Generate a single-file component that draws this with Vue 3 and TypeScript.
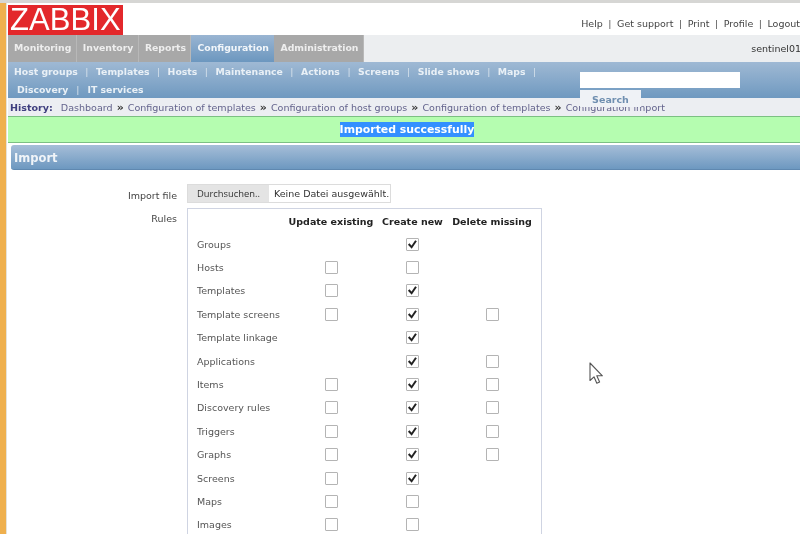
<script setup lang="ts">
interface Rule {
  name: string;
  update: boolean | null;
  create: boolean | null;
  del: boolean | null;
}

const mainMenu: string[] = ['Monitoring', 'Inventory', 'Reports', 'Configuration', 'Administration'];
const subRowOne: string[] = ['Host groups', 'Templates', 'Hosts', 'Maintenance', 'Actions', 'Screens', 'Slide shows', 'Maps'];
const subRowTwo: string[] = ['Discovery', 'IT services'];
const topLinks: string[] = ['Help', 'Get support', 'Print', 'Profile', 'Logout'];
const history: string[] = ['Dashboard', 'Configuration of templates', 'Configuration of host groups', 'Configuration of templates', 'Configuration import'];

const rules: Rule[] = [
  { name: 'Groups', update: null, create: true, del: null },
  { name: 'Hosts', update: false, create: false, del: null },
  { name: 'Templates', update: false, create: true, del: null },
  { name: 'Template screens', update: false, create: true, del: false },
  { name: 'Template linkage', update: null, create: true, del: null },
  { name: 'Applications', update: null, create: true, del: false },
  { name: 'Items', update: false, create: true, del: false },
  { name: 'Discovery rules', update: false, create: true, del: false },
  { name: 'Triggers', update: false, create: true, del: false },
  { name: 'Graphs', update: false, create: true, del: false },
  { name: 'Screens', update: false, create: true, del: null },
  { name: 'Maps', update: false, create: false, del: null },
  { name: 'Images', update: false, create: false, del: null },
];
</script>

<template>
  <div class="page">
    <div class="browser-top"></div>
    <div class="shell">
      <aside class="edge"></aside>
      <main class="content">
        <header class="top">
          <div class="logo">ZABBIX</div>
          <nav class="top-links">
            <template v-for="(link, i) in topLinks" :key="link">
              <span v-if="i" class="top-sep">|</span>
              <a>{{ link }}</a>
            </template>
          </nav>
        </header>

        <div class="main-bar">
          <nav class="main-menu">
            <a v-for="item in mainMenu" :key="item" class="main-item" :class="{ active: item === 'Configuration' }">{{ item }}</a>
          </nav>
          <span class="server">sentinel01</span>
        </div>

        <div class="sub-bar">
          <div class="sub-row first">
            <template v-for="item in subRowOne" :key="item">
              <a>{{ item }}</a><span class="sub-sep">|</span>
            </template>
          </div>
          <div class="sub-row second">
            <template v-for="(item, i) in subRowTwo" :key="item">
              <span v-if="i" class="sub-sep">|</span><a>{{ item }}</a>
            </template>
          </div>
          <div class="search">
            <div class="search-input"></div>
            <div class="search-btn">Search</div>
          </div>
        </div>

        <div class="history">
          <b class="history-label">History:</b>
          <template v-for="(item, i) in history" :key="i">
            <span v-if="i" class="history-sep">»</span>
            <a>{{ item }}</a>
          </template>
        </div>

        <div class="message"><span class="selected">Imported successfully</span></div>

        <section class="panel">
          <h2 class="panel-head">Import</h2>
          <div class="form">
            <div class="form-label file-label">Import file</div>
            <div class="file">
              <span class="file-btn">Durchsuchen..</span>
              <span class="file-name">Keine Datei ausgewählt.</span>
            </div>
            <div class="form-label rules-label">Rules</div>
            <div class="rules">
              <div class="rules-grid head">
                <span></span>
                <b>Update existing</b>
                <b>Create new</b>
                <b>Delete missing</b>
              </div>
              <div v-for="rule in rules" :key="rule.name" class="rules-grid row">
                <span class="rule-name">{{ rule.name }}</span>
                <span class="cell"><i v-if="rule.update !== null" class="box" :class="{ on: rule.update }"></i></span>
                <span class="cell"><i v-if="rule.create !== null" class="box" :class="{ on: rule.create }">
                  <svg v-if="rule.create" viewBox="0 0 13 13" width="13" height="13"><path d="M2.7 6 5.6 9.2 10 2.8" fill="none" stroke="#222" stroke-width="2" /></svg>
                </i></span>
                <span class="cell"><i v-if="rule.del !== null" class="box" :class="{ on: rule.del }"></i></span>
              </div>
            </div>
          </div>
        </section>

        <svg class="cursor" viewBox="0 0 16 24" width="16" height="24">
          <path d="M1 1V18.5L5 14.8 7.8 21.2 10.6 20 7.8 13.8H13.4Z" fill="#fff" stroke="#555" stroke-width="1.1" stroke-linejoin="round" />
        </svg>
      </main>
    </div>
  </div>
</template>

<style>
html, body { margin: 0; background: #fff; overflow: hidden; }
</style>

<style scoped>
.page {
  width: 800px;
  height: 534px;
  overflow: hidden;
  font-family: "DejaVu Sans", sans-serif;
  font-size: 9.5px;
  background: #fff;
  filter: blur(0.45px);
}
.browser-top { height: 3px; background: #d6d6d4; }
.shell { display: flex; height: 531px; }
.edge { width: 6px; flex: none; background: #efb04e; border-right: 1px solid #e6e2d8; }
.content { position: relative; width: 793px; flex: none; padding-left: 1px; box-sizing: border-box; overflow: hidden; }

.top { display: flex; justify-content: space-between; height: 32px; }
.logo {
  width: 115px; height: 30px; margin-top: 2px;
  background: #e3282b; color: #fff;
  font: 31px/30px "Liberation Sans", sans-serif;
  letter-spacing: 0.1px; text-indent: 2px;
}
.top-links { display: flex; gap: 5.5px; padding-top: 14px; color: #444; line-height: 13px; }
.top-sep { color: #555; }

.main-bar { display: flex; justify-content: space-between; height: 27px; background: #eceef0; }
.main-menu { display: flex; }
.main-item {
  padding: 0 5.5px 0 6px; line-height: 26px; font-size: 9.3px; font-weight: bold; color: #eee;
  background: #a8a8a8; box-shadow: inset -1px 0 0 #b8b8b8;
}
.main-item.active { background: linear-gradient(#9ab5d2, #6c97bf); color: #f2f6fa; box-shadow: none; }
.server { padding-top: 7px; margin-right: -1px; color: #333; line-height: 13px; }

.sub-bar {
  position: relative; z-index: 1; height: 36px; padding-left: 6px;
  background: linear-gradient(#9fb9d4, #6f99c0);
  color: #e9f0f6; font-size: 9.3px; font-weight: bold;
}
.sub-row { display: flex; height: 18px; line-height: 20px; }
.sub-row.first { gap: 7.5px; }
.sub-row.second { gap: 8px; padding-left: 3px; }
.sub-sep { font-weight: normal; color: #d7e2ec; }
.search { position: absolute; left: 572px; top: 10px; }
.search-input { width: 160px; height: 16px; background: #fff; }
.search-btn {
  width: 61px; height: 17px; margin-top: 2px;
  background: #eff2f6; color: #6f8fb0; text-align: center; line-height: 20px; font-size: 9.5px;
}

.history {
  height: 18px; display: flex; gap: 4px; padding-left: 2px; line-height: 19px; font-size: 9.55px;
  background: #eceef2; color: #63638c; white-space: nowrap;
}
.history-label { color: #3f3f7f; margin-right: 4px; }
.history-sep { font-weight: bold; font-size: 11px; color: #333; }

.message {
  height: 25px; line-height: 25px; text-align: center; padding-left: 6px;
  background: #b5fdb0; border-top: 1px solid #7cc083; border-bottom: 1px solid #7cc083;
  font-size: 10.9px; font-weight: bold; color: #fff;
}
.selected { background: #3390ff; padding: 1px 0; }

.panel { margin: 2px 0 0 3px; }
.panel-head {
  margin: 0; height: 25px; padding-left: 3px; box-sizing: border-box;
  border-radius: 3px 0 0 3px; border-bottom: 1px solid #5f88b0;
  background: linear-gradient(#a6bed8, #6d98c0);
  font-size: 11.5px; line-height: 27px; font-weight: bold; color: #f0f4f8;
}

.form {
  display: grid; grid-template-columns: 166px 1fr; column-gap: 10px;
  padding-top: 14px; color: #444; align-items: start;
}
.form-label { text-align: right; line-height: 13px; }
.file-label { padding-top: 5px; }
.rules-label { padding-top: 4px; }
.file { display: flex; height: 19px; margin-bottom: 5px; border: 1px solid #dcdcdc; width: 204px; line-height: 17px; box-sizing: border-box; color: #333; white-space: nowrap; overflow: hidden; }
.file-btn { width: 81px; flex: none; background: #e4e4e4; text-align: center; font-family: "Open Sans", sans-serif; font-size: 9.4px; }
.file-name { padding-left: 5px; }

.rules { width: 355px; box-sizing: border-box; border: 1px solid #cfd4e2; padding: 6px 0 0 9px; }
.rules-grid { display: grid; grid-template-columns: 88px 92px 71px 88px; white-space: nowrap; }
.rules-grid.head { height: 17.5px; line-height: 14px; color: #222; text-align: center; }
.rules-grid.head b { font-weight: bold; }
.rules-grid.row { height: 23.4px; align-items: center; }
.rule-name { color: #555; }
.cell { display: flex; justify-content: center; }
.box { display: block; width: 13px; height: 13px; box-sizing: border-box; border: 1px solid #b4b4b4; border-radius: 1px; background: #fff; }
.box svg { display: block; margin: -1px; }

.cursor { position: absolute; left: 582px; top: 359px; }
</style>
